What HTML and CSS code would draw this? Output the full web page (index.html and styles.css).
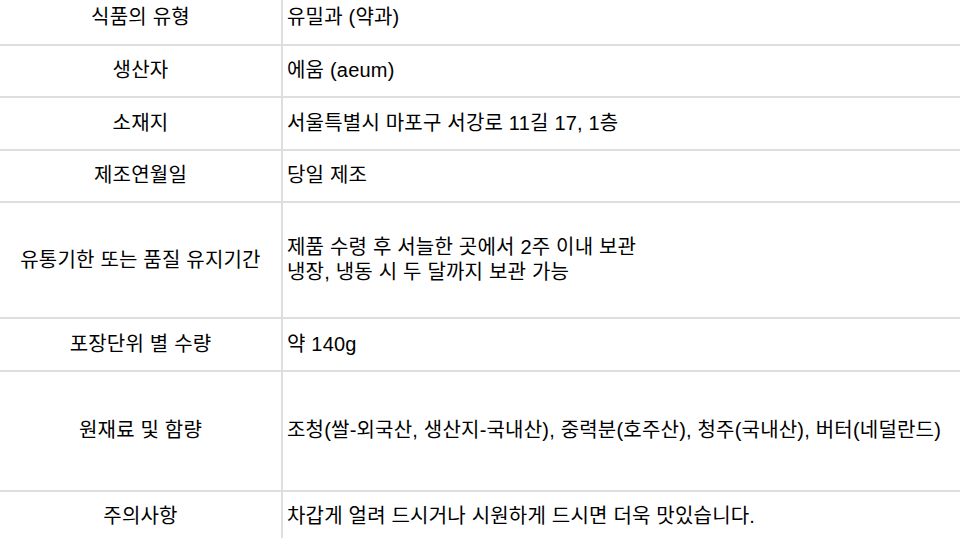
FILE: index.html
```html
<!DOCTYPE html>
<html lang="ko">
<head>
<meta charset="utf-8">
<link rel="stylesheet" href="styles.css">
</head>
<body>
<table class="info">
  <tbody>
    <tr><th>식품의 유형</th><td>유밀과 (약과)</td></tr>
    <tr><th>생산자</th><td>에움 (aeum)</td></tr>
    <tr><th>소재지</th><td>서울특별시 마포구 서강로 11길 17, 1층</td></tr>
    <tr><th>제조연월일</th><td>당일 제조</td></tr>
    <tr class="tall"><th>유통기한 또는 품질 유지기간</th><td>제품 수령 후 서늘한 곳에서 2주 이내 보관<br>냉장, 냉동 시 두 달까지 보관 가능</td></tr>
    <tr><th>포장단위 별 수량</th><td>약 140g</td></tr>
    <tr class="taller"><th>원재료 및 함량</th><td>조청(쌀-외국산, 생산지-국내산), 중력분(호주산), 청주(국내산), 버터(네덜란드)</td></tr>
    <tr><th>주의사항</th><td>차갑게 얼려 드시거나 시원하게 드시면 더욱 맛있습니다.</td></tr>
  </tbody>
</table>
</body>
</html>
```
FILE: styles.css
```css
html, body {
  margin: 0;
  padding: 0;
  background: #fff;
}
body {
  font-family: "Liberation Sans", "Noto Sans CJK KR", sans-serif;
  font-size: 20px;
  letter-spacing: 0.2px;
  color: #000;
  overflow: hidden;
}
.info {
  width: 100%;
  border-collapse: collapse;
  margin-top: -8px;
}
.info th,
.info td {
  border: 2px solid #dedede;
  height: 52.5px;
  padding: 0 4px;
  line-height: 25px;
  vertical-align: middle;
  box-sizing: border-box;
}
.info tr:first-child th,
.info tr:first-child td {
  border-top: none;
}
.info th {
  width: 282px;
  border-left: none;
  font-weight: normal;
  text-align: center;
  padding: 0;
}
.info td {
  border-right: none;
  text-align: left;
}
.info tr.tall th,
.info tr.tall td {
  height: 116px;
}
.info tr.taller th,
.info tr.taller td {
  height: 120px;
}
```
